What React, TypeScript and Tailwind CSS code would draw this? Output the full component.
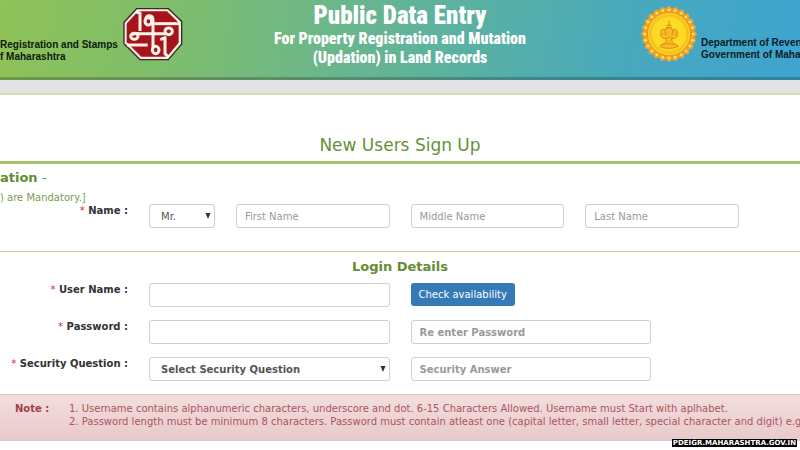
import React from "react";

const control =
  "block h-6 w-full min-w-0 rounded-[3px] border border-[#cfcfcf] bg-white px-2 text-[10px] text-[#555] placeholder:text-[#999] placeholder:opacity-100 outline-none";
const nameRow = "grid grid-cols-[128px_66fr_154fr_154fr_154fr] gap-x-[21px] pr-[61px]";
const loginRow = "grid grid-cols-[128px_1fr_1fr] gap-x-[21px] pr-[149px]";

function StampsLogo() {
  return (
    <svg viewBox="10 20 180 162" className="h-[54px] w-[60px] shrink-0" aria-hidden="true">
      <polygon points="50,23 147,23 188,62 188,132 147,180 60,180 11,131 11,65" fill="#3b2a26" />
      <polygon points="52,27 145,27 184,64 184,130 145,176 62,176 15,129 15,67" fill="#f6efe6" />
      <polygon points="55,33 142,33 177,67 177,127 142,169 65,169 21,126 21,70" fill="#a5141b" />
      <g fill="none" stroke="#fbf3ea" strokeWidth="9" strokeLinejoin="round">
        <path d="M50 36 L61 38 V92" />
        <ellipse cx="86" cy="63" rx="10" ry="11" />
        <path d="M78 56 C82 42 100 42 100 60 V144" />
        <path d="M104 70 H178" />
        <ellipse cx="44" cy="108" rx="11" ry="9" />
        <path d="M36 104 C42 97 50 100 60 100 H138" />
        <ellipse cx="147" cy="93" rx="11" ry="10" />
        <path d="M22 134 H84" />
        <ellipse cx="108" cy="149" rx="10" ry="11" />
        <path d="M122 118 L136 112 V160 L146 170" />
      </g>
    </svg>
  );
}

function StateSeal() {
  const beads = Array.from({ length: 24 }, (_, i) => (i * Math.PI) / 12);
  return (
    <svg viewBox="0 0 168 168" className="h-14 w-14 shrink-0" aria-hidden="true">
      <circle cx="84" cy="84" r="78" fill="#f0a023" />
      {beads.map((a) => (
        <circle key={a} cx={84 + 76 * Math.sin(a)} cy={84 + 76 * Math.cos(a)} r="7" fill="#f6a52a" />
      ))}
      {beads.map((a) => (
        <circle key={a} cx={84 + 72 * Math.sin(a)} cy={84 + 72 * Math.cos(a)} r="4" fill="#ffe75c" />
      ))}
      <circle cx="84" cy="84" r="65" fill="#fbcf22" stroke="#ec951d" strokeWidth="3" />
      <circle cx="84" cy="84" r="56" fill="none" stroke="#edb01e" strokeWidth="5" strokeDasharray="3 3" />
      <circle cx="84" cy="84" r="49" fill="#fddb22" />
      <g fill="#f6bd22" stroke="#e08a1c" strokeWidth="3" strokeLinecap="round">
        <path d="M84 44 V60 M78 58 H90 M76 64 H92" />
        <circle cx="68" cy="79" r="9" />
        <circle cx="100" cy="79" r="9" />
        <circle cx="84" cy="77" r="12" />
        <path d="M58 86 C62 100 72 100 84 94 C96 100 106 100 110 86" />
        <path d="M76 98 C76 108 72 112 64 116 H104 C96 112 92 108 92 98" />
        <ellipse cx="84" cy="120" rx="27" ry="7" />
      </g>
    </svg>
  );
}

function FieldLabel({ htmlFor, children }: { htmlFor: string; children: React.ReactNode }) {
  return (
    <label htmlFor={htmlFor} className="text-right text-[10px] leading-[14px] font-bold whitespace-nowrap text-[#333]">
      <span className="font-normal text-[#e0283c]">*</span> {children} :
    </label>
  );
}

function Dropdown({ id, label, bold }: { id: string; label: string; bold?: boolean }) {
  return (
    <div className="relative min-w-0">
      <select id={id} className={`${control} appearance-none pl-[11px] ${bold ? "font-bold" : ""}`}>
        <option>{label}</option>
      </select>
      <svg viewBox="0 0 6 6" className="pointer-events-none absolute top-[9px] right-1 size-[6px]" aria-hidden="true">
        <polygon points="0.5,0 5.5,0 3,6" fill="#333" />
      </svg>
    </div>
  );
}

export default function App() {
  return (
    <div className="relative min-h-screen overflow-hidden bg-white font-['DejaVu_Sans',Verdana,sans-serif]">
      <header className="flex h-20 items-start border-b-3 border-[#00000038] bg-[linear-gradient(100deg,#8fc257_0%,#7ebd6c_22%,#6fb886_38%,#58b0a4_60%,#48a9bd_78%,#3ea4d0_100%)] bg-origin-border">
        <p className="w-[123px] shrink-0 pt-[39px] font-['Liberation_Sans',Arial,sans-serif] text-[10px] leading-3 font-bold whitespace-nowrap text-[#0d1a0d]">
          Registration and Stamps
          <br />f Maharashtra
        </p>
        <div className="pt-[7px]">
          <StampsLogo />
        </div>
        <h1 className="flex-1 pt-[2px] pr-6 text-center font-[Impact,'Roboto_Condensed','Open_Sans_Condensed',Roboto,sans-serif] text-base leading-[19px] font-black whitespace-nowrap text-white">
          <span className="block text-[25px] leading-[27px]">Public Data Entry</span>
          For Property Registration and Mutation
          <br />
          (Updation) in Land Records
        </h1>
        <div className="pt-[6px]">
          <StateSeal />
        </div>
        <p className="ml-[4px] w-[99px] pt-[37px] font-['Liberation_Sans',Arial,sans-serif] text-[10px] leading-3 font-bold whitespace-nowrap text-[#0a1c28]">
          Department of Reven
          <br />
          Government of Mahar
        </p>
      </header>
      <div className="h-[15px] border-b-2 border-[#cfe0a4] bg-[#e4e2e4]" />

      <main>
        <h2 className="border-b-3 border-[#a6c16a] pt-[39px] pb-[5px] text-center text-[17px] leading-[22px] text-[#688f38]">
          New Users Sign Up
        </h2>

        <form>
          <section className="h-[87px] pt-[6px]">
            <h3 className="text-[13px] leading-4 font-bold text-[#648c32]">
              ation <span className="font-normal">-</span>
            </h3>
            <p className="mt-[5px] text-[10px] leading-[13px] text-[#7b9a4c]">) are Mandatory.]</p>
            <div className={nameRow}>
              <FieldLabel htmlFor="title">Name</FieldLabel>
              <Dropdown id="title" label="Mr." />
              <input className={control} aria-label="First Name" placeholder="First Name" />
              <input className={control} aria-label="Middle Name" placeholder="Middle Name" />
              <input className={control} aria-label="Last Name" placeholder="Last Name" />
            </div>
          </section>

          <section className="border-t border-[#bccf98] pt-[7px]">
            <h3 className="text-center text-[13px] leading-4 font-bold text-[#648c32]">Login Details</h3>
            <div className="mt-2 grid gap-y-[13px]">
              <div className={loginRow}>
                <FieldLabel htmlFor="user">User Name</FieldLabel>
                <input id="user" className={control} />
                <div className="flex items-start">
                  <button type="button" className="h-[23px] rounded-[3px] bg-[#337ab7] px-2 text-[10px] whitespace-nowrap text-white">
                    Check availability
                  </button>
                </div>
              </div>
              <div className={loginRow}>
                <FieldLabel htmlFor="password">Password</FieldLabel>
                <input id="password" type="password" className={control} />
                <input type="password" aria-label="Re enter Password" className={`${control} font-bold`} placeholder="Re enter Password" />
              </div>
              <div className={loginRow}>
                <FieldLabel htmlFor="question">Security Question</FieldLabel>
                <Dropdown id="question" label="Select Security Question" bold />
                <input aria-label="Security Answer" className={`${control} font-bold`} placeholder="Security Answer" />
              </div>
            </div>
          </section>
        </form>

        <aside className="mt-[13px] flex h-[47px] overflow-hidden border-y border-[#e3c8ca] bg-linear-to-b from-[#f2dede] to-[#e9c9cb] pt-[7px] pl-[15px] text-[10px] leading-[13px] whitespace-nowrap text-[#a9575a]">
          <strong className="w-[54px] shrink-0 text-[#a04144]">Note :</strong>
          <ol className="list-inside list-decimal">
            <li>Username contains alphanumeric characters, underscore and dot. 6-15 Characters Allowed. Username must Start with aplhabet.</li>
            <li>Password length must be minimum 8 characters. Password must contain atleast one (capital letter, small letter, special character and digit) e.g a</li>
          </ol>
        </aside>
      </main>

      <footer className="absolute right-[3px] bottom-[3px] bg-black px-px text-[7px] leading-2 font-bold text-white">PDEIGR.MAHARASHTRA.GOV.IN</footer>
    </div>
  );
}
